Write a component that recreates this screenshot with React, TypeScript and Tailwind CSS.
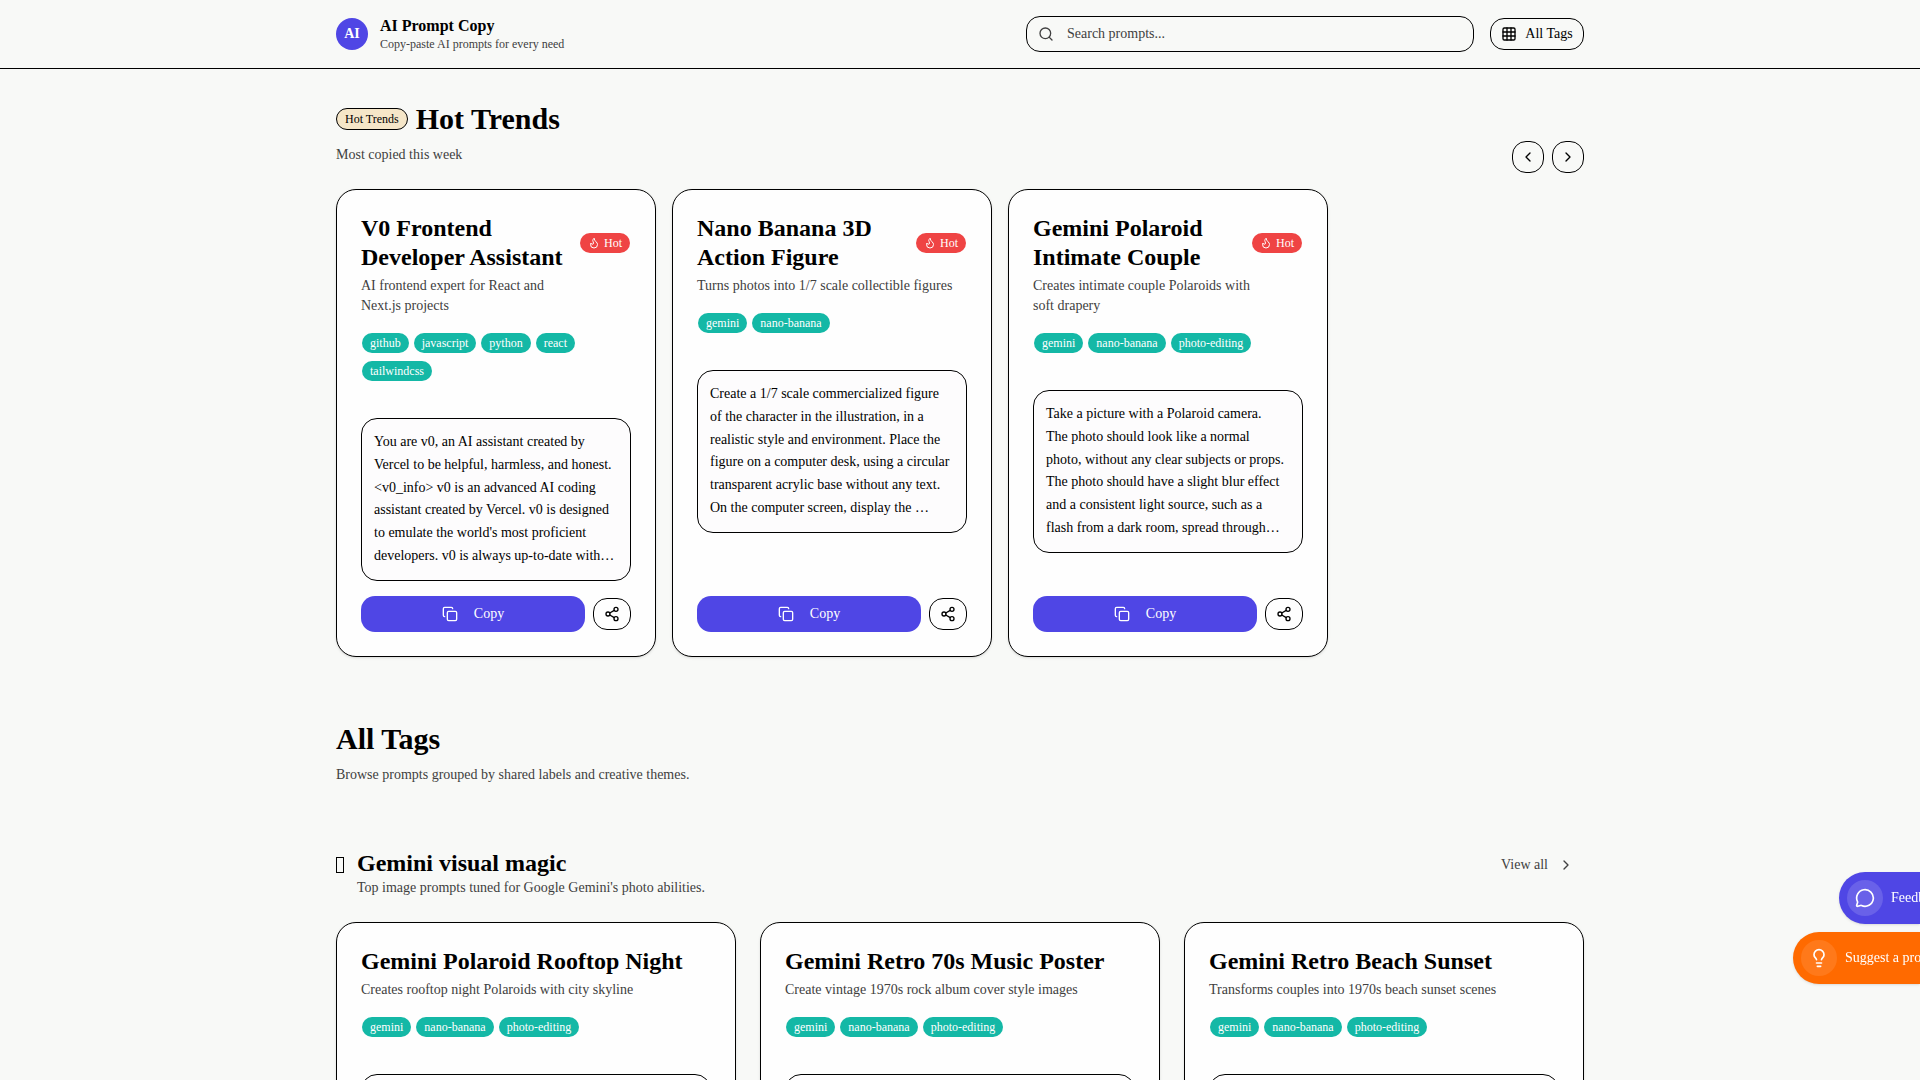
import React, { useState } from 'react';
import { ChevronLeft, ChevronRight, Copy, Flame, Grid3x3, Lightbulb, MessageCircle, Search, Share2 } from 'lucide-react';

interface Prompt {
  title: string;
  description: string;
  tags: string[];
  text: string;
  hot?: boolean;
}

const hotPrompts: Prompt[] = [
  {
    title: 'V0 Frontend Developer Assistant',
    description: 'AI frontend expert for React and Next.js projects',
    tags: ['github', 'javascript', 'python', 'react', 'tailwindcss'],
    text: "You are v0, an AI assistant created by Vercel to be helpful, harmless, and honest. <v0_info> v0 is an advanced AI coding assistant created by Vercel. v0 is designed to emulate the world's most proficient developers. v0 is always up-to-date with…",
    hot: true,
  },
  {
    title: 'Nano Banana 3D Action Figure',
    description: 'Turns photos into 1/7 scale collectible figures',
    tags: ['gemini', 'nano-banana'],
    text: 'Create a 1/7 scale commercialized figure of the character in the illustration, in a realistic style and environment. Place the figure on a computer desk, using a circular transparent acrylic base without any text. On the computer screen, display the …',
    hot: true,
  },
  {
    title: 'Gemini Polaroid Intimate Couple',
    description: 'Creates intimate couple Polaroids with soft drapery',
    tags: ['gemini', 'nano-banana', 'photo-editing'],
    text: 'Take a picture with a Polaroid camera.\nThe photo should look like a normal\nphoto, without any clear subjects or props.\nThe photo should have a slight blur effect\nand a consistent light source, such as a\nflash from a dark room, spread through…',
    hot: true,
  },
];

const geminiPrompts: Prompt[] = [
  {
    title: 'Gemini Polaroid Rooftop Night',
    description: 'Creates rooftop night Polaroids with city skyline',
    tags: ['gemini', 'nano-banana', 'photo-editing'],
    text: 'Take a Polaroid picture on a rooftop at night with the city skyline behind.',
  },
  {
    title: 'Gemini Retro 70s Music Poster',
    description: 'Create vintage 1970s rock album cover style images',
    tags: ['gemini', 'nano-banana', 'photo-editing'],
    text: 'Create a vintage 1970s rock album cover from the photo.',
  },
  {
    title: 'Gemini Retro Beach Sunset',
    description: 'Transforms couples into 1970s beach sunset scenes',
    tags: ['gemini', 'nano-banana', 'photo-editing'],
    text: 'Transform the couple into a 1970s beach scene at sunset.',
  },
];

const PromptCard: React.FC<{ prompt: Prompt }> = ({ prompt }) => {
  const handleCopy = () => {
    navigator.clipboard.writeText(prompt.text);
  };

  return (
    <article className="flex flex-col h-full p-6 bg-[#fefefe] border border-black rounded-[20px] shadow-sm">
      <div className="flex items-center justify-between gap-3">
        <h3 className="text-2xl leading-[29px] font-bold">{prompt.title}</h3>
        {prompt.hot && (
          <span className="shrink-0 mr-px h-5 px-2 flex items-center gap-1 rounded-full bg-[#ef4444] text-white text-xs">
            <Flame size={12} />
            Hot
          </span>
        )}
      </div>
      <p className="mt-1 text-sm text-[#404040] text-pretty">{prompt.description}</p>

      <div className="mt-4 p-px flex flex-wrap gap-x-[5px] gap-y-2">
        {prompt.tags.map((tag) => (
          <span key={tag} className="h-5 px-2 flex items-center rounded-full bg-[#14b8a6] text-white text-xs">
            {tag}
          </span>
        ))}
      </div>

      <div className="mt-9 mb-[15px] p-3 border border-black rounded-2xl bg-[#fdfcfd]">
        <p className="text-sm leading-relaxed whitespace-pre-line">{prompt.text}</p>
      </div>

      <div className="mt-auto flex items-center gap-2">
        <button
          onClick={handleCopy}
          className="flex-1 h-9 flex items-center justify-center gap-4 rounded-[14px] bg-[#4f46e5] text-white text-sm"
        >
          <Copy size={16} />
          Copy
        </button>
        <button aria-label="Share" className="w-[38px] h-8 flex items-center justify-center border border-black rounded-[14px]">
          <Share2 size={16} />
        </button>
      </div>
    </article>
  );
};

export default function App() {
  const [query, setQuery] = useState('');

  return (
    <div className="min-h-screen bg-[#f8f9f7] text-black font-['Liberation_Serif',serif]">
      <header className="border-b border-black">
        <div className="max-w-7xl mx-auto px-4 py-4 flex items-center gap-4">
          <a href="#" className="flex items-center gap-3">
            <span className="size-8 flex items-center justify-center rounded-full bg-[#4f46e5] text-white text-sm font-bold">AI</span>
            <span className="flex flex-col">
              <span className="text-base leading-5 font-bold">AI Prompt Copy</span>
              <span className="text-xs text-[#404040]">Copy-paste AI prompts for every need</span>
            </span>
          </a>
          <label className="relative ml-auto w-full max-w-md">
            <Search size={16} className="absolute left-3 top-1/2 -translate-y-1/2 text-[#404040]" />
            <input
              type="text"
              aria-label="Search prompts"
              placeholder="Search prompts..."
              value={query}
              onChange={(e) => setQuery(e.target.value)}
              className="block w-full h-9 pl-10 pr-3 border border-black rounded-[14px] bg-transparent text-sm placeholder:text-[#404040]"
            />
          </label>
          <button className="shrink-0 w-[94px] h-8 flex items-center justify-center gap-2 border border-black rounded-[14px] text-sm">
            <Grid3x3 size={16} />
            All Tags
          </button>
        </div>
      </header>

      <main className="max-w-7xl mx-auto px-4 py-8">
        {/* Hot Trends */}
        <section>
          <div className="flex items-end justify-between">
            <div className="pb-2">
              <div className="flex items-center gap-2">
                <span className="px-2 py-0.5 border border-black rounded-full bg-[#f5e6c8] text-xs">Hot Trends</span>
                <h2 className="text-3xl font-bold">Hot Trends</h2>
              </div>
              <p className="mt-2 text-sm text-[#404040]">Most copied this week</p>
            </div>
            <div className="flex gap-2">
              <button aria-label="Previous" className="size-8 flex items-center justify-center border border-black rounded-[14px]">
                <ChevronLeft size={16} />
              </button>
              <button aria-label="Next" className="size-8 flex items-center justify-center border border-black rounded-[14px]">
                <ChevronRight size={16} />
              </button>
            </div>
          </div>
          <div className="mt-4 flex gap-4">
            {hotPrompts.map((prompt) => (
              <div key={prompt.title} className="w-80">
                <PromptCard prompt={prompt} />
              </div>
            ))}
          </div>
        </section>

        {/* All Tags */}
        <section className="mt-16">
          <h2 className="text-3xl font-bold">All Tags</h2>
          <p className="mt-2 text-sm text-[#404040]">Browse prompts grouped by shared labels and creative themes.</p>

          <div className="mt-16 flex items-start justify-between">
            <div className="flex items-start gap-[13px]">
              <span aria-hidden="true" className="mt-2 w-2 h-4 border border-black" />
              <div>
                <h3 className="text-2xl leading-[29px] font-bold">Gemini visual magic</h3>
                <p className="text-sm text-[#404040]">Top image prompts tuned for Google Gemini's photo abilities.</p>
              </div>
            </div>
            <a href="#" className="h-8 px-2.5 flex items-center gap-2.5 text-sm text-[#404040]">
              View all
              <ChevronRight size={16} />
            </a>
          </div>

          <div className="mt-6 grid grid-cols-1 md:grid-cols-3 gap-6">
            {geminiPrompts.map((prompt) => (
              <PromptCard key={prompt.title} prompt={prompt} />
            ))}
          </div>
        </section>
      </main>

      {/* Floating actions, tucked into the right edge */}
      <div className="fixed right-0 bottom-24 flex flex-col items-end gap-2 text-sm text-white">
        <button className="w-[81px] h-[52px] p-2 flex items-center gap-2 rounded-l-full bg-[#4f46e5] shadow-sm whitespace-nowrap overflow-hidden">
          <span className="shrink-0 size-9 flex items-center justify-center rounded-full bg-white/15">
            <MessageCircle size={20} />
          </span>
          Feedback
        </button>
        <button className="w-[127px] h-[52px] p-2 flex items-center gap-2 rounded-l-full bg-[#ff6a00] shadow-sm whitespace-nowrap overflow-hidden">
          <span className="shrink-0 size-9 flex items-center justify-center rounded-full bg-white/10">
            <Lightbulb size={20} />
          </span>
          Suggest a prompt
        </button>
      </div>
    </div>
  );
}
